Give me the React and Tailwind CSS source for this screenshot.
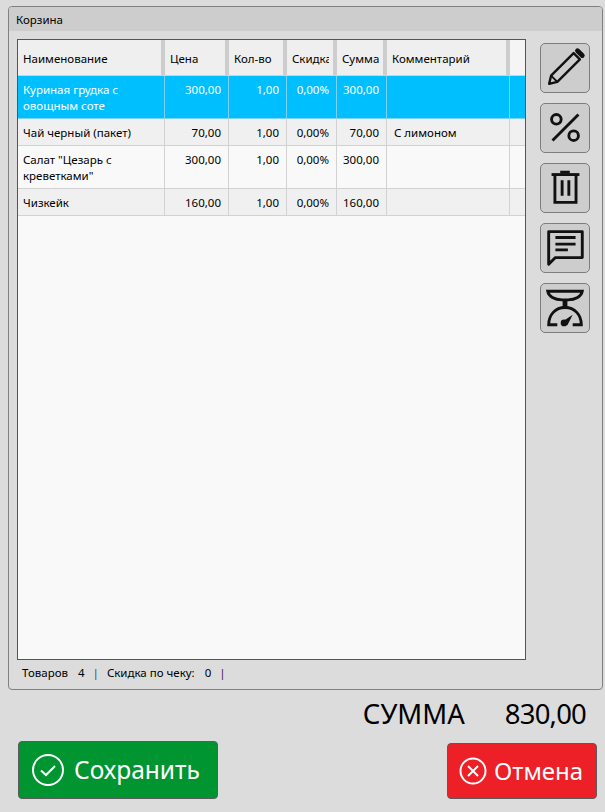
const rows = [
  { name: ['Куриная грудка с', 'овощным соте'], price: '300,00', qty: '1,00', disc: '0,00%', sum: '300,00', comment: '', h: 'h-[43px]', bg: 'bg-[#00bfff] text-white', line: 'border-[#7fd3f0]' },
  { name: ['Чай черный (пакет)'], price: '70,00', qty: '1,00', disc: '0,00%', sum: '70,00', comment: 'С лимоном', h: 'h-[27px]', bg: 'bg-[#f0f0f0]', line: 'border-[#d2d2d2]' },
  { name: ['Салат "Цезарь с', 'креветками"'], price: '300,00', qty: '1,00', disc: '0,00%', sum: '300,00', comment: '', h: 'h-[43px]', bg: 'bg-[#f9f9f9]', line: 'border-[#d2d2d2]' },
  { name: ['Чизкейк'], price: '160,00', qty: '1,00', disc: '0,00%', sum: '160,00', comment: '', h: 'h-[27px]', bg: 'bg-[#f0f0f0]', line: 'border-[#d2d2d2]' },
];

const HeadCell = ({ w, children }) => (
  <div className={`${w} h-full shrink-0 flex items-center justify-between bg-[#efefef]`}>
    <span className="ml-[5px] mr-[4px] pt-[2px] overflow-hidden whitespace-nowrap flex-1 min-w-0">{children}</span>
    <span className="w-[4px] h-full shrink-0 bg-[#cdcdcd]" />
  </div>
);

const Cell = ({ w, line, right, children }) => (
  <div className={`${w} h-full shrink-0 border-r ${line} pt-[6px] ${right ? 'text-right pr-[7px]' : 'pl-[5px]'} leading-[16px]`}>
    {children}
  </div>
);

const ToolButton = ({ children }) => (
  <button className="w-[50px] h-[50px] rounded-[5px] border border-[#7e7e7e] bg-[#cdcdcd] flex items-center justify-center">
    <svg width="50" height="50" viewBox="0 0 50 50" fill="none" stroke="#111" strokeWidth="3">{children}</svg>
  </button>
);

const App = () => (
  <div className="w-[605px] h-[812px] bg-[#dcdcdc] overflow-hidden text-[#000] text-[11.5px] font-['Noto_Sans',sans-serif]">
    <div className="pt-[6px] pl-[8px] pr-[2px]">
      <div className="h-[684px] rounded-[4px] border border-[#808080] flex flex-col">
        <div className="h-[24px] shrink-0 bg-[#cdcdcd] rounded-t-[3px] pl-[7px] pt-[1px] flex items-center">Корзина</div>
        <div className="flex pt-[8px] pl-[8px]">
          <div className="w-[509px] h-[621px] border border-[#555] bg-[#f9f9f9] flex flex-col">
            <div className="h-[36px] flex items-center shrink-0 border-b border-[#d2d2d2]">
              <HeadCell w="w-[147px]">Наименование</HeadCell>
              <HeadCell w="w-[64px]">Цена</HeadCell>
              <HeadCell w="w-[58px]">Кол-во</HeadCell>
              <HeadCell w="w-[50px]">Скидка</HeadCell>
              <HeadCell w="w-[50px]">Сумма</HeadCell>
              <HeadCell w="w-[123px]">Комментарий</HeadCell>
              <div className="flex-1 h-full bg-[#f5f5f5]" />
            </div>
            {rows.map((r, i) => (
              <div key={i} className={`${r.h} ${r.bg} flex shrink-0 border-b ${r.line}`}>
                <Cell w="w-[147px]" line={r.line}>
                  {r.name.map((t) => <div key={t}>{t}</div>)}
                </Cell>
                <Cell w="w-[64px]" line={r.line} right>{r.price}</Cell>
                <Cell w="w-[58px]" line={r.line} right>{r.qty}</Cell>
                <Cell w="w-[50px]" line={r.line} right>{r.disc}</Cell>
                <Cell w="w-[50px]" line={r.line} right>{r.sum}</Cell>
                <Cell w="w-[123px]" line={r.line}><span className="pl-[2px]">{r.comment}</span></Cell>
              </div>
            ))}
          </div>
          <div className="ml-[14px] pt-[4px] flex flex-col gap-[10px]">
            <ToolButton>
              <path d="M8.5 41.5 L10.5 33 L34 9.5 L40.5 16 L17 39.5 Z" strokeWidth="2.5" strokeLinejoin="round" />
              <path d="M11 33.5 L16.5 39" strokeWidth="2" />
              <path d="M38 7 L43 12" strokeWidth="5" strokeLinecap="round" />
            </ToolButton>
            <ToolButton>
              <circle cx="16" cy="16" r="5" />
              <circle cx="34" cy="33" r="5" />
              <path d="M39 11 L12 38" />
            </ToolButton>
            <ToolButton>
              <path d="M11 11 H40" />
              <path d="M20 8.5 H30" />
              <path d="M14.5 11 V40 H36.5 V11" />
              <path d="M22 17 V33 M29 17 V33" />
            </ToolButton>
            <ToolButton>
              <path d="M8 8 H43 V35 H15 L8 42 Z" strokeLinejoin="round" />
              <path d="M15 14 H36 M15 21 H36 M15 27 H28" />
            </ToolButton>
            <ToolButton>
              <path d="M7 7.5 H43 C42 13 36 16.5 28 16.5 H22 C14 16.5 8 13 7 7.5 Z" />
              <path d="M25 17 V24" strokeWidth="5" />
              <path d="M17 42.5 H8 C8 32 15 24.5 25 24.5 C35 24.5 42 32 42 42.5 H33" />
              <path d="M21 40 L33 32 L27.5 43 Z" fill="#111" stroke="none" />
              <circle cx="24" cy="40.5" r="3.5" fill="#111" stroke="none" />
            </ToolButton>
          </div>
        </div>
        <div className="flex items-center pl-[13px] pt-[4px] whitespace-pre">
          <span>Товаров</span>
          <span className="ml-[10px]">4</span>
          <span className="ml-[8px] text-[#0a4f9a]">|</span>
          <span className="ml-[8px]">Скидка по чеку:</span>
          <span className="ml-[10px]">0</span>
          <span className="ml-[8px] text-[#4b0f5e]">|</span>
        </div>
      </div>
    </div>

    <div className="flex justify-end pr-[19px] mt-[5px] text-[27.5px] leading-[37px] h-[46px]">
      <span>СУММА</span>
      <span className="ml-[40px] tracking-[-0.8px]">830,00</span>
    </div>

    <div className="flex justify-between items-end pl-[18px] pr-[8px] h-[58px]">
      <button className="w-[200px] h-[58px] rounded-[4px] border border-[#5b5b5b] bg-[#009530] flex items-center pl-[12px] text-white text-[24.5px]">
        <svg width="34" height="34" viewBox="0 0 34 34" fill="none" stroke="#fff">
          <circle cx="17" cy="17" r="15" strokeWidth="2" />
          <path d="M10 17.5 L15 22 L24 13" strokeWidth="2" />
        </svg>
        <span className="ml-[9px]">Сохранить</span>
      </button>
      <button className="w-[150px] h-[56px] rounded-[4px] border border-[#5b5b5b] bg-[#ed1f27] flex items-center pl-[11px] text-white text-[24px]">
        <svg width="28" height="28" viewBox="0 0 28 28" fill="none" stroke="#fff" strokeWidth="2">
          <circle cx="14" cy="14" r="12.5" />
          <path d="M9 9 L19 19 M19 9 L9 19" />
        </svg>
        <span className="ml-[7px]">Отмена</span>
      </button>
    </div>
  </div>
);

export default App;
